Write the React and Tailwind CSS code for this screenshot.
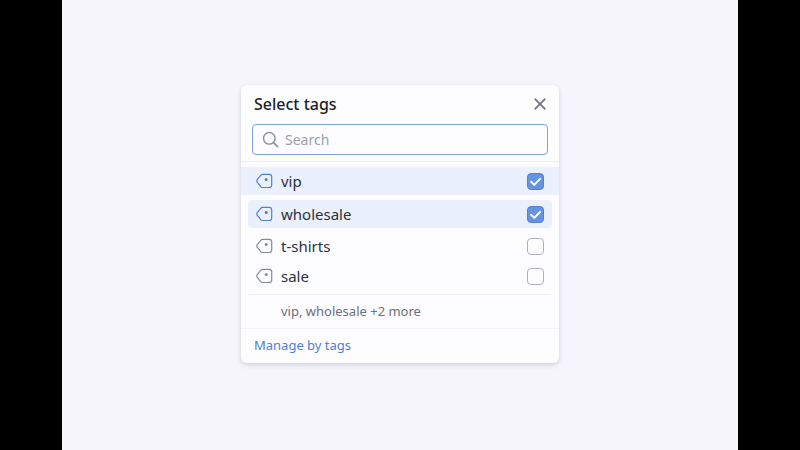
import React, { useState } from 'react'

const initialTags = [
  { name: 'vip', checked: true, row: 'h-7 px-[15px] mb-[5px] bg-[#ebf1fc]' },
  { name: 'wholesale', checked: true, row: 'h-7 mx-[7px] px-2 mb-1 rounded bg-[#ebf1fc]' },
  { name: 't-shirts', checked: false, row: 'h-7 px-[15px] mb-0.5' },
  { name: 'sale', checked: false, row: 'h-7 px-[15px]' },
]

function TagIcon({ className }) {
  return (
    <svg className={className} width="17" height="16" viewBox="0 0 17 16" fill="none" aria-hidden="true">
      <path
        d="M6.6 1.3H13.2C14.8 1.3 15.7 2.2 15.7 3.7V12C15.7 13.6 14.8 14.5 13.2 14.5H6.6C5.9 14.5 5.4 14.3 4.9 13.8L1.4 9.4C0.6 8.4 0.6 7.4 1.4 6.4L4.9 2.1C5.4 1.6 5.9 1.3 6.6 1.3Z"
        stroke="currentColor"
        strokeWidth="1.2"
      />
      <circle cx="10.2" cy="6.6" r="1.5" fill="currentColor" />
    </svg>
  )
}

function TagRow({ tag, onToggle }) {
  return (
    <label className={`flex items-center cursor-pointer ${tag.row}`}>
      <TagIcon className={tag.checked ? 'text-[#5080d4]' : 'text-[#868a9b]'} />
      <span className="ml-2 flex-1 text-[15px] leading-5 text-[#2c303e]">{tag.name}</span>
      <span className="grid">
        <input
          type="checkbox"
          checked={tag.checked}
          onChange={onToggle}
          className="col-start-1 row-start-1 size-[17px] appearance-none rounded border border-[#b0b2bb] bg-[#fdfdfe] checked:border-[#5580d2] checked:bg-[#6594e2]"
        />
        {tag.checked && (
          <svg className="col-start-1 row-start-1 pointer-events-none" width="17" height="17" viewBox="0 0 17 17" fill="none" aria-hidden="true">
            <path d="M4.1 8.8L7.3 11.9L13.1 5.9" stroke="white" strokeWidth="2" strokeLinecap="round" strokeLinejoin="round" />
          </svg>
        )}
      </span>
    </label>
  )
}

function App() {
  const [tags, setTags] = useState(initialTags)

  const toggle = (name) =>
    setTags(tags.map((t) => (t.name === name ? { ...t, checked: !t.checked } : t)))

  return (
    <div className="min-h-screen flex bg-black px-[62px] font-['Noto_Sans',sans-serif]">
      <main className="flex-1 flex items-center justify-center pb-0.5 bg-[#f5f5fb]">
        <section className="w-full max-w-[318px] rounded-md bg-[#fdfdff] shadow-[0_2px_5px_rgba(50,50,90,0.18)]">

          <header className="flex items-center justify-between pt-[7px] pl-[13px] pr-3">
            <h2 className="text-[16px] leading-6 font-medium text-[#1c1d27]">Select tags</h2>
            <button aria-label="Close" className="text-[#727481]">
              <svg width="14" height="14" viewBox="0 0 14 14" fill="none" aria-hidden="true">
                <path d="M2.2 2.2L11.8 11.8M11.8 2.2L2.2 11.8" stroke="currentColor" strokeWidth="1.8" strokeLinecap="round" />
              </svg>
            </button>
          </header>

          <div className="px-[11px] pt-2 pb-1.5 border-b border-[#eeeff5]">
            <label className="flex items-center gap-1.5 h-[31px] px-[9px] rounded border border-[#7fa0de]">
              <svg className="shrink-0 text-[#8d909d]" width="17" height="17" viewBox="0 0 17 17" fill="none" aria-hidden="true">
                <circle cx="7.3" cy="7.3" r="5.8" stroke="currentColor" strokeWidth="1.4" />
                <path d="M11.6 11.6L15.6 15.6" stroke="currentColor" strokeWidth="1.6" strokeLinecap="round" />
              </svg>
              <input
                type="text"
                aria-label="Search"
                placeholder="Search"
                className="w-full min-w-0 text-[14px] leading-5 text-[#2c303e] placeholder:text-[#9b9eab] outline-none"
              />
            </label>
          </div>

          <div className="pt-[5px] pb-1">
            {tags.map((tag) => (
              <TagRow key={tag.name} tag={tag} onToggle={() => toggle(tag.name)} />
            ))}
          </div>

          <p className="mx-2 pl-8 py-[7px] border-t border-[#eeeff4] text-[13px] leading-[19px] text-[#6d6f7a]">
            vip, wholesale +2 more
          </p>

          <footer className="px-[13px] pt-1.5 pb-2 border-t border-[#f2f2f7]">
            <a href="#manage" className="block text-[13px] leading-5 text-[#5080d0]">Manage by tags</a>
          </footer>

        </section>
      </main>
    </div>
  )
}

export default App
